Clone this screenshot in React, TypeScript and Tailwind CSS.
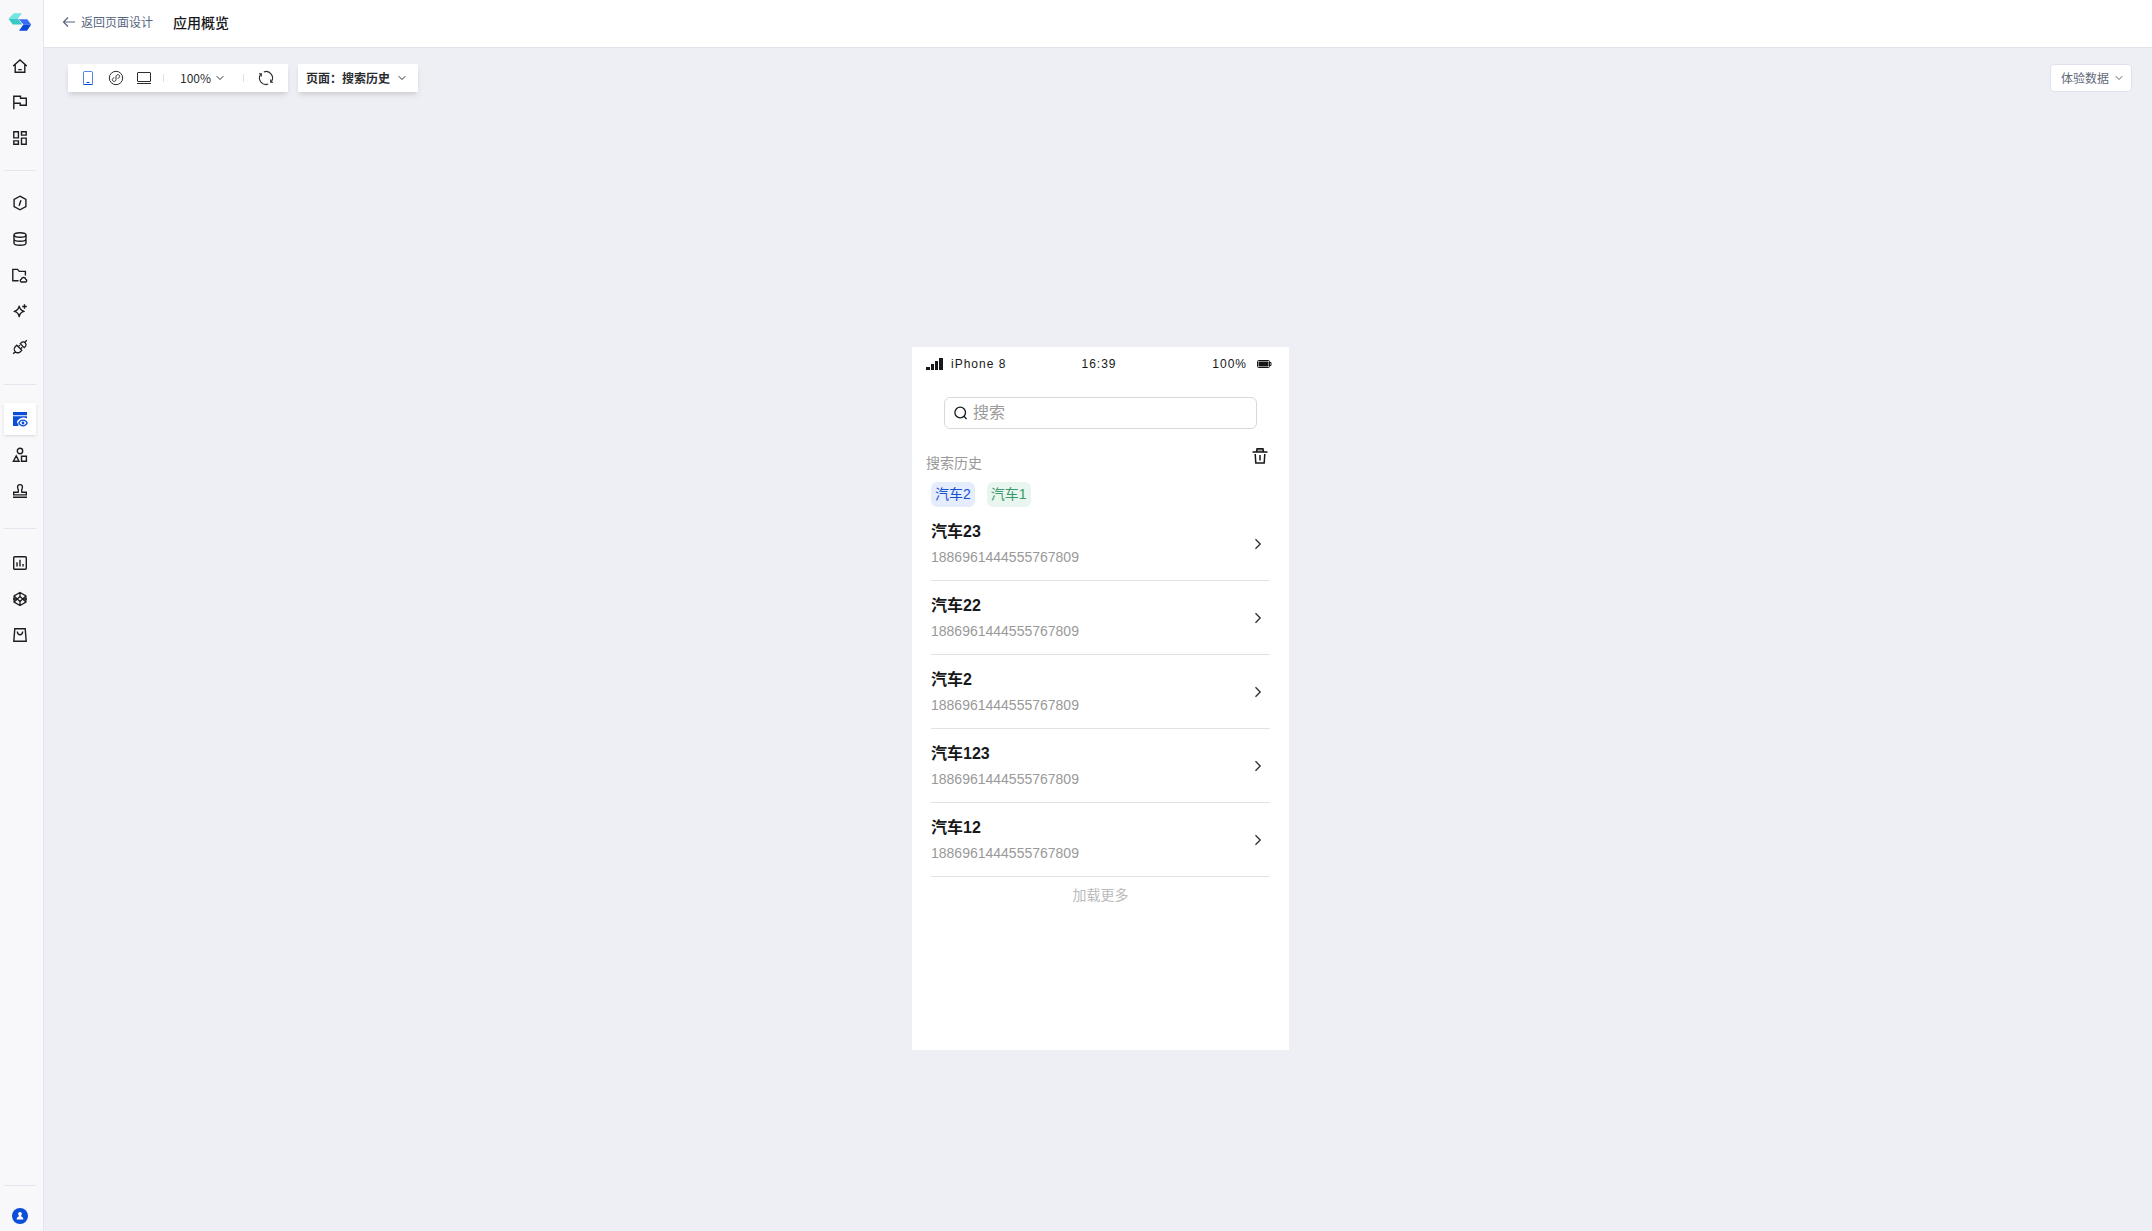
import { useState } from "react";
import type { ReactNode } from "react";

type NavItem = { name: string; icon: ReactNode; active?: boolean };

const Stroke = ({ children }: { children: ReactNode }) => (
  <svg viewBox="0 0 16 16" className="size-4" fill="none" stroke="currentColor" strokeWidth="1.4">
    {children}
  </svg>
);

const mainNav: NavItem[] = [
  {
    name: "首页",
    icon: <Stroke><path d="M1.2 8.1 8 1.9l6.8 6.2M3.2 6.8v7.5h9.6V6.8M6.3 11.6h3.4" /></Stroke>,
  },
  {
    name: "里程碑",
    icon: <Stroke><path d="M1.8 15.3V2.2h6.7v2h5.8v7.1H8.2v-2H1.8" /></Stroke>,
  },
  {
    name: "应用",
    icon: <Stroke><path d="M1.8 1.8h4.6v6.1H1.8zM9.5 1.8h4.7v3.3H9.5zM1.8 10.9h4.6v3.3H1.8zM9.5 8.1h4.7v6.1H9.5z" /></Stroke>,
  },
];

const dataNav: NavItem[] = [
  {
    name: "云函数",
    icon: <Stroke><path d="M8 1.2 13.9 4.5v7L8 14.8 2.1 11.5v-7zM9 5.2 7.1 10.8" /></Stroke>,
  },
  {
    name: "数据库",
    icon: (
      <Stroke>
        <ellipse cx="8" cy="4" rx="6" ry="2.2" />
        <path d="M2 4v8c0 1.3 2.7 2.3 6 2.3s6-1 6-2.3V4M2 8c0 1.3 2.7 2.3 6 2.3s6-1 6-2.3" />
      </Stroke>
    ),
  },
  {
    name: "云存储",
    icon: (
      <Stroke>
        <path d="M6.6 13.8H.8V2.400h4.700l1.800 2h6.100v4" />
        <path d="M9.400 15h4a1.400 1.400 0 0 0 .4-2.700 2.300 2.300 0 0 0-4.400-.2 1.500 1.500 0 0 0 0 2.900z" />
      </Stroke>
    ),
  },
  {
    name: "智能",
    icon: <Stroke><path d="M7.2 3.2c.6 3.3 1.8 4.5 5 5.2-3.2.7-4.4 1.9-5 5.2-.6-3.3-1.8-4.5-5-5.2 3.2-.7 4.4-1.9 5-5.2zM12.5 1.2v4.6M10.2 3.5h4.6" strokeLinejoin="round" /></Stroke>,
  },
  {
    name: "连接器",
    icon: (
      <Stroke>
        <path d="m4.800 6.200 5 5-1.500 1.500a3.500 3.500 0 0 1-5-5zM8.300 4.700l1.500-1.500a2.900 2.900 0 0 1 3.900 3.900l-1.500 1.500zM1.200 14.800l2-2M13 3l1.800-1.800M6.400 7.600l1.500-1.500M8.700 9.800l1.500-1.500" strokeWidth="1.3" />
      </Stroke>
    ),
  },
];

const pageNav: NavItem[] = [
  {
    name: "应用预览",
    active: true,
    icon: (
      <svg viewBox="0 0 16 16" className="size-4" fill="currentColor">
        <path d="M1 1h14v3.2H1zM1 5.2h14v2.3a8 8 0 0 0-3.800-.9C8 6.600 5.800 8.900 4.900 11c.3.900.8 1.700 1.500 2.500V15H1z" />
        <path d="M11 9.200c2 0 3.300 1.100 4.200 2.800-.9 1.700-2.200 2.800-4.200 2.800s-3.300-1.100-4.200-2.800c.9-1.700 2.200-2.800 4.200-2.800z" fill="none" stroke="currentColor" strokeWidth="1.3" />
        <circle cx="11" cy="12" r="1.4" />
      </svg>
    ),
  },
  {
    name: "素材",
    icon: (
      <Stroke>
        <circle cx="8" cy="4" r="2.7" />
        <path d="M4.2 8.900 7 14.200H1.400zM9.500 9.300h4.900v4.900H9.500z" />
      </Stroke>
    ),
  },
  {
    name: "审批",
    icon: <Stroke><path d="M1.700 11.900V9.200h4.500c.5-1.500.3-2.400-.3-3.600C4.900 3.200 6.200 1.600 8 1.600s3.100 1.600 2.100 4c-.6 1.200-.8 2.100-.3 3.600h4.500v2.700zM1 14.200h14" /></Stroke>,
  },
];

const opsNav: NavItem[] = [
  {
    name: "统计",
    icon: (
      <Stroke>
        <rect x="1.7" y="1.7" width="12.6" height="12.6" rx="1" />
        <path d="M5 7.3v4.2M8 4.7v6.8M11 9v2.5" />
      </Stroke>
    ),
  },
  {
    name: "组件",
    icon: (
      <Stroke>
        <path d="M8 1.500 13.900 4.900v6.200L8 14.500 2.100 11.100V4.900zM8 1.500v4M8 10.500v4M2.100 4.900 8 10.500l5.900-5.600M2.100 11.100 8 5.500l5.900 5.600M1 8h4M11 8h4" strokeWidth="1.3" />
      </Stroke>
    ),
  },
  {
    name: "市场",
    icon: <Stroke><path d="M2.800 1.800h10.400l1 12.400H1.800zM5.300 4.500c.2 2.200 1.200 3.300 2.700 3.300s2.500-1.100 2.700-3.300" /></Stroke>,
  },
];

const cars = ["汽车23", "汽车22", "汽车2", "汽车123", "汽车12"];

const NavGroup = ({ items }: { items: NavItem[] }) => (
  <ul className="flex flex-col gap-1">
    {items.map((item) => (
      <li key={item.name}>
        <button
          aria-label={item.name}
          className={
            item.active
              ? "flex size-8 items-center justify-center bg-white text-[#0b4ed8] shadow-sm cursor-pointer"
              : "flex size-8 items-center justify-center text-[#1c1d20] cursor-pointer"
          }
        >
          {item.icon}
        </button>
      </li>
    ))}
  </ul>
);

const Divider = () => <hr className="mt-[21px] mb-[18px] w-8 border-[#e3e6ef]" />;

const ChevronDown = () => (
  <svg viewBox="0 0 8 8" className="size-2 shrink-0" fill="none" stroke="currentColor">
    <path d="m.7 2.2 3.3 3.3 3.3-3.3" />
  </svg>
);

function Sidebar() {
  return (
    <nav className="flex w-11 shrink-0 flex-col border-r border-[#e4e6ee] bg-[#f8f8fb] pl-1">
      <a href="#" aria-label="logo" className="mb-1.5 flex h-11 w-8 items-center justify-center">
        <svg viewBox="0 0 24 20" className="h-5 w-6">
          <path d="M5.800 1.200h8L10 6.800H.500z" fill="#74e3e2" />
          <path d="M.500 6.800H10l4.200 5.600H4.600z" fill="#38c8c6" />
          <path d="M10.800 7.200h8.400l4 5.200h-7.800z" fill="#3a6cf5" />
          <path d="M15.400 12.400h7.800L19 18.800h-8z" fill="#0b49d4" />
        </svg>
      </a>
      <NavGroup items={mainNav} />
      <hr className="my-4 w-8 border-[#e3e6ef]" />
      <NavGroup items={dataNav} />
      <Divider />
      <NavGroup items={pageNav} />
      <Divider />
      <NavGroup items={opsNav} />
      <hr className="mt-auto w-8 border-[#e3e6ef]" />
      <button aria-label="账号" className="mt-[15px] flex h-[30px] w-8 items-center justify-center cursor-pointer">
        <svg viewBox="0 0 16 16" className="size-4">
          <circle cx="8" cy="8" r="8" fill="#0b4ed8" />
          <circle cx="8" cy="5.800" r="1.900" fill="#fff" />
          <path d="M6.900 7h2.200v1.600c1.400.3 2.200 1.200 2.200 2.900H4.700c0-1.700.8-2.600 2.200-2.900z" fill="#fff" />
        </svg>
      </button>
    </nav>
  );
}

function Toolbar() {
  const [device, setDevice] = useState("mobile");
  const tone = (name: string) => (device === name ? "text-[#0b4ed8]" : "text-[#2b2d31]");

  return (
    <div className="flex h-7 items-center gap-2.5">
      <div className="flex h-7 items-center bg-white pl-1.5 pr-2 shadow-md">
        <button aria-label="手机" onClick={() => setDevice("mobile")} className={`flex size-7 items-center justify-center cursor-pointer ${tone("mobile")}`}>
          <svg viewBox="0 0 16 16" className="size-4" fill="none" stroke="currentColor">
            <rect x="3.500" y="1.500" width="9" height="13" rx="1" strokeOpacity=".7" />
            <path d="M6.500 12.500h3M3.500 14.500h9" />
          </svg>
        </button>
        <button aria-label="小程序" onClick={() => setDevice("mini")} className={`flex size-7 items-center justify-center cursor-pointer ${tone("mini")}`}>
          <svg viewBox="0 0 16 16" className="size-4" fill="none" stroke="currentColor">
            <circle cx="8" cy="8" r="6.700" />
            <path d="M9.700 8.300c1.300-.2 2-1 2-1.900 0-1-.8-1.700-1.800-1.700S8 5.400 8 6.500v3c0 1.100-.8 1.900-1.900 1.900s-1.800-.7-1.800-1.700c0-.9.700-1.700 2-1.900" />
          </svg>
        </button>
        <button aria-label="电脑" onClick={() => setDevice("desktop")} className={`flex size-7 items-center justify-center cursor-pointer ${tone("desktop")}`}>
          <svg viewBox="0 0 16 16" className="size-4" fill="none" stroke="currentColor">
            <rect x="1.500" y="2.500" width="13" height="9" rx=".5" />
            <path d="M1 13.500h14" />
          </svg>
        </button>
        <span className="ml-[5px] h-2 w-px bg-[#dcdee3]" />
        <label className="ml-4 flex items-center gap-1 text-xs text-[#2b2d31]">
          <select aria-label="缩放" className="w-8 appearance-none bg-transparent outline-none">
            <option>100%</option>
          </select>
          <ChevronDown />
        </label>
        <span className="ml-[19px] h-2 w-px bg-[#dcdee3]" />
        <button aria-label="刷新" className="ml-2 flex size-7 items-center justify-center text-[#2b2d31] cursor-pointer">
          <svg viewBox="0 0 16 16" className="size-4" fill="none" stroke="currentColor" strokeWidth="1.1">
            <path d="M5.800 1.900a6.500 6.500 0 0 1 7.400 10M10.200 14.100a6.500 6.500 0 0 1-7.400-10" />
            <path d="M12.700 9.600v2.700h2.300M3.300 6.400V3.700H1" />
          </svg>
        </button>
      </div>
      <div className="flex h-7 items-center bg-white pl-2 pr-3 text-xs font-bold text-[#2b2d31] shadow-md">
        <label htmlFor="page">页面：</label>
        <select id="page" className="mr-2 w-12 appearance-none bg-transparent outline-none">
          <option>搜索历史</option>
        </select>
        <ChevronDown />
      </div>
      <div className="ml-auto flex h-7 items-center rounded-sm border border-[#dfe2ea] bg-white pl-2.5 pr-2 text-xs text-[#5f6978]">
        <select aria-label="数据" className="mr-1.5 w-12 appearance-none bg-transparent outline-none">
          <option>体验数据</option>
        </select>
        <ChevronDown />
      </div>
    </div>
  );
}

function StatusBar() {
  return (
    <div className="grid h-[34px] grid-cols-3 items-center pl-3.5 pr-[17px] text-xs tracking-[1px] text-[#17181a]">
      <span className="flex items-center gap-2">
        <svg viewBox="0 0 17 12" className="h-3 w-[17px]" fill="currentColor">
          <path d="M0 9h4v3H0zM5 6h3v6H5zM9 3h3v9H9zM13 0h4v12h-4z" />
        </svg>
        iPhone 8
      </span>
      <span className="text-center">16:39</span>
      <span className="flex items-center justify-end gap-2.5">
        100%
        <svg viewBox="0 0 15 8" className="h-2 w-[15px]" fill="none" stroke="currentColor">
          <rect x=".5" y=".5" width="12" height="7" rx="1" />
          <path d="M1.500 1.500h10v5h-10z" fill="currentColor" stroke="none" />
          <path d="M12.500 2.500H14v3h-1.500" />
        </svg>
      </span>
    </div>
  );
}

function Phone() {
  return (
    <section className="mx-auto flex min-h-[703px] w-[377px] flex-col bg-white font-['Liberation_Sans','Noto_Sans_CJK_SC',sans-serif]">
      <StatusBar />
      <label className="mx-8 mt-4 flex h-8 items-center gap-1.5 rounded-md border border-[#d9d9d9] px-2">
        <svg viewBox="0 0 14 14" className="size-3.5 shrink-0 text-[#17181a]" fill="none" stroke="currentColor" strokeWidth="1.3">
          <circle cx="7.200" cy="6.500" r="5.300" />
          <path d="m10.900 10.300 2.700 2.700" />
        </svg>
        <input type="search" aria-label="搜索" placeholder="搜索" className="min-w-0 flex-1 text-base text-[#17181a] outline-none placeholder:text-[#9b9b9b]" />
      </label>
      <div className="mt-4 flex justify-between pl-3.5 pr-5">
        <h2 className="mt-2 text-sm leading-5 text-[#999]">搜索历史</h2>
        <button aria-label="清空" className="mt-0.5 flex h-6 cursor-pointer text-[#17181a]">
          <svg viewBox="0 0 18 18" className="size-[18px]" fill="none" stroke="currentColor" strokeWidth="1.5">
            <path d="M5.500 1.800h7l1 3h-9z" fill="currentColor" fillOpacity=".4" stroke="none" />
            <path d="M1.500 5h15M5.500 5l.6-3.200h5.800l.6 3.200M4.200 7l.6 9h8.400l.6-9M9 8v5.500" />
          </svg>
        </button>
      </div>
      <div className="mt-[9px] flex gap-3 px-[19px] text-sm leading-[25px]">
        <button className="rounded-md bg-[#e5ecfb] px-1 text-[#1650d3] cursor-pointer">汽车2</button>
        <button className="rounded-md bg-[#e9f5ef] px-1 text-[#3a9a6c] cursor-pointer">汽车1</button>
      </div>
      <ul className="px-[19px]">
        {cars.map((car) => (
          <li key={car} className="flex items-center justify-between border-b border-[#e2e2e2] pt-[13px] pb-3 pr-2">
            <div className="flex flex-col gap-0.5">
              <h3 className="text-base leading-6 font-bold text-[#17181a]">{car}</h3>
              <p className="text-sm leading-[22px] text-[#999]">1886961444555767809</p>
            </div>
            <svg viewBox="0 0 8 12" className="h-3 w-2 text-[#2b2d31]" fill="none" stroke="currentColor" strokeWidth="1.3">
              <path d="m1.500 1.300 4.700 4.700-4.700 4.700" />
            </svg>
          </li>
        ))}
      </ul>
      <button className="mt-2 self-center text-sm leading-5 text-[#bbb] cursor-pointer">加载更多</button>
    </section>
  );
}

export default function App() {
  return (
    <div className="flex min-h-screen bg-[#eeeff4] font-['Noto_Sans_CJK_SC',sans-serif]">
      <Sidebar />
      <div className="flex flex-1 flex-col">
        <header className="flex h-12 items-center gap-5 border-b border-[#e1e3ea] bg-white pb-1 pl-[18px]">
          <a href="#" className="flex items-center gap-[5px] text-xs text-[#56647e]">
            <svg viewBox="0 0 14 14" className="size-3.5" fill="none" stroke="currentColor" strokeWidth="1.2">
              <path d="M13 7H1.500M6 2.500 1.500 7 6 11.500" />
            </svg>
            返回页面设计
          </a>
          <h1 className="text-sm font-medium text-[#17181a]">应用概览</h1>
        </header>
        <main className="flex flex-1 flex-col pt-4 pr-5 pl-6">
          <Toolbar />
          <div className="flex flex-1 items-center pt-[74px] pl-px">
            <Phone />
          </div>
        </main>
      </div>
    </div>
  );
}
